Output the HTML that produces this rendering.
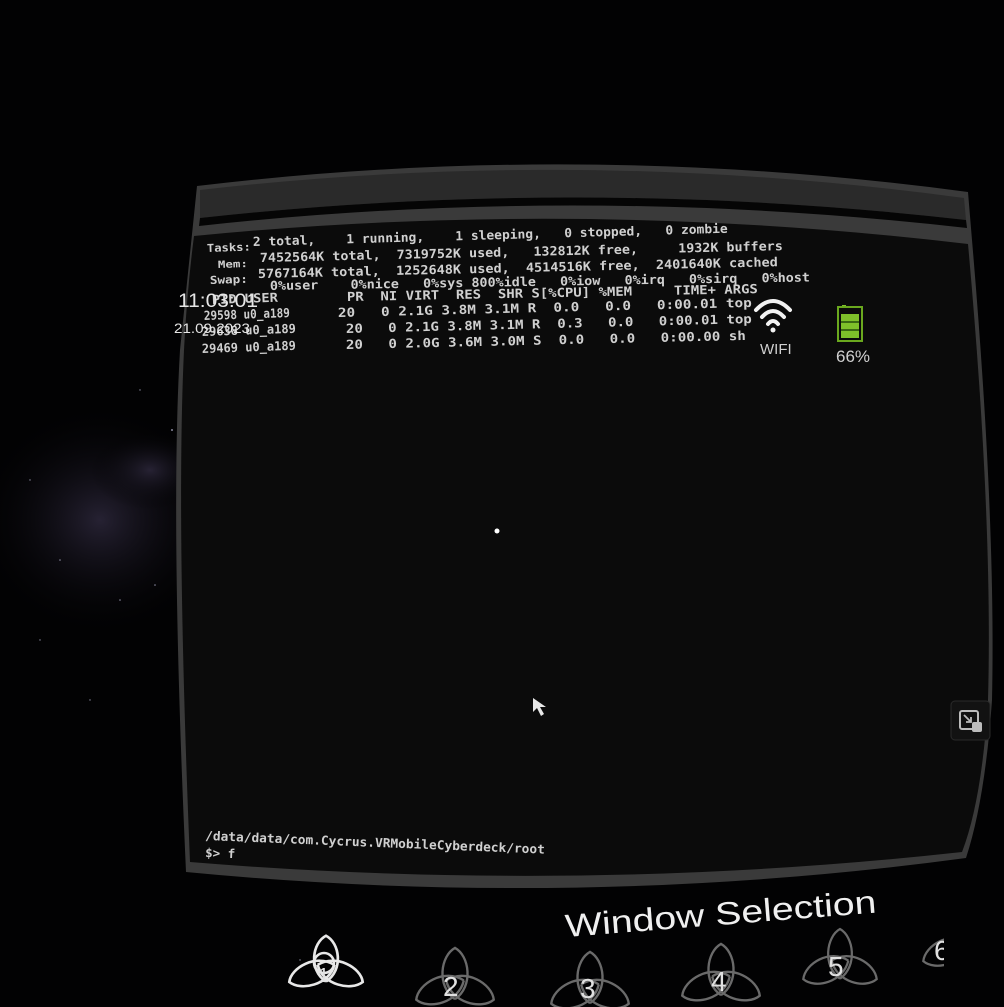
<!DOCTYPE html>
<html><head><meta charset="utf-8"><style>
html,body{margin:0;padding:0;background:#000;width:1004px;height:1007px;overflow:hidden}
svg{display:block}
.m{font-family:"DejaVu Sans Mono","Liberation Mono",monospace;fill:#d0d0d0;font-size:12.5px;font-weight:bold}
</style></head><body>
<svg width="1004" height="1007" viewBox="0 0 1004 1007" xmlns="http://www.w3.org/2000/svg">
<defs>
<radialGradient id="mw" cx="0.5" cy="0.5" r="0.5">
<stop offset="0" stop-color="#2a2538" stop-opacity="0.9"/>
<stop offset="1" stop-color="#000" stop-opacity="0"/>
</radialGradient>
<g id="tq" fill="none">
<path d="M0 16 C-20 2 -15 -30 0 -38 C15 -30 20 2 0 16"/>
<path d="M0 16 C-20 2 -15 -30 0 -38 C15 -30 20 2 0 16" transform="rotate(112) translate(0 -6)"/>
<path d="M0 16 C-20 2 -15 -30 0 -38 C15 -30 20 2 0 16" transform="rotate(-112) translate(0 -6)"/>
</g>
<clipPath id="cl"><rect x="0" y="0" width="944" height="1007"/></clipPath>
</defs>
<rect width="1004" height="1007" fill="#020203"/>
<ellipse cx="100" cy="520" rx="130" ry="120" fill="url(#mw)"/>
<ellipse cx="150" cy="470" rx="60" ry="40" fill="url(#mw)"/>
<g fill="#8a8aa0">
<circle cx="172" cy="430" r="1"/><circle cx="60" cy="560" r="0.8"/><circle cx="120" cy="600" r="0.8"/>
<circle cx="30" cy="480" r="0.7"/><circle cx="90" cy="700" r="0.7"/><circle cx="140" cy="390" r="0.7"/>
<circle cx="40" cy="640" r="0.7"/><circle cx="155" cy="585" r="0.8"/><circle cx="300" cy="960" r="0.7"/>
</g>
<path d="M197 186 Q580 140 968 192 L972 240 Q996 520 992 700 Q985 800 966 858 Q580 910 186 872 Q170 520 180 350 Z" fill="#3a3a3a"/>
<path d="M200 190 Q580 146 964 198 L966 220 Q580 176 200 218 Z" fill="#2a2a2a"/>
<path d="M200 218 Q580 176 966 220 L967 228 Q580 184 199 226 Z" fill="#050505"/>
<path d="M194 236 Q580 198 968 244 Q993 520 988 700 Q982 800 962 852 Q580 894 190 862 Q176 520 184 350 Q187 290 194 236 Z" fill="#0b0b0b"/>
<g class="m">
<text x="207" y="252" font-size="11" textLength="44" lengthAdjust="spacingAndGlyphs" transform="rotate(-2 207 252)">Tasks:</text>
<text x="218" y="268" font-size="10" textLength="30" lengthAdjust="spacingAndGlyphs" transform="rotate(-2 218 268)">Mem:</text>
<text x="210" y="284" font-size="11" textLength="38" lengthAdjust="spacingAndGlyphs" transform="rotate(-2 210 284)">Swap:</text>
<text x="253" y="246" textLength="475" lengthAdjust="spacingAndGlyphs" transform="rotate(-1.6 253 246)">2&#160;total,&#160;&#160;&#160;&#160;1&#160;running,&#160;&#160;&#160;&#160;1&#160;sleeping,&#160;&#160;&#160;0&#160;stopped,&#160;&#160;&#160;0&#160;zombie</text>
<text x="260" y="262" textLength="523" lengthAdjust="spacingAndGlyphs" transform="rotate(-1.3 260 262)">7452564K&#160;total,&#160;&#160;7319752K&#160;used,&#160;&#160;&#160;132812K&#160;free,&#160;&#160;&#160;&#160;&#160;1932K&#160;buffers</text>
<text x="258" y="278" textLength="520" lengthAdjust="spacingAndGlyphs" transform="rotate(-1.3 258 278)">5767164K&#160;total,&#160;&#160;1252648K&#160;used,&#160;&#160;4514516K&#160;free,&#160;&#160;2401640K&#160;cached</text>
<text x="270" y="290" textLength="540" lengthAdjust="spacingAndGlyphs" transform="rotate(-0.9 270 290)">0%user&#160;&#160;&#160;&#160;0%nice&#160;&#160;&#160;0%sys&#160;800%idle&#160;&#160;&#160;0%iow&#160;&#160;&#160;0%irq&#160;&#160;&#160;0%sirq&#160;&#160;&#160;0%host</text>
<text x="347" y="301" textLength="411" lengthAdjust="spacingAndGlyphs" transform="rotate(-1.1 347 301)">PR&#160;&#160;NI&#160;VIRT&#160;&#160;RES&#160;&#160;SHR&#160;S[%CPU]&#160;%MEM&#160;&#160;&#160;&#160;&#160;TIME+&#160;ARGS</text>
<text x="212" y="304" textLength="66" lengthAdjust="spacingAndGlyphs" transform="rotate(-2 212 304)">PID&#160;USER</text>
<text x="204" y="320" textLength="86" lengthAdjust="spacingAndGlyphs" transform="rotate(-2 204 320)">29598&#160;u0_a189</text>
<text x="202" y="336" textLength="94" lengthAdjust="spacingAndGlyphs" transform="rotate(-2 202 336)">29638&#160;u0_a189</text>
<text x="202" y="353" textLength="94" lengthAdjust="spacingAndGlyphs" transform="rotate(-2 202 353)">29469&#160;u0_a189</text>
<text x="338" y="317" textLength="414" lengthAdjust="spacingAndGlyphs" transform="rotate(-1.4 338 317)">20&#160;&#160;&#160;0&#160;2.1G&#160;3.8M&#160;3.1M&#160;R&#160;&#160;0.0&#160;&#160;&#160;0.0&#160;&#160;&#160;0:00.01&#160;top</text>
<text x="346" y="333" textLength="406" lengthAdjust="spacingAndGlyphs" transform="rotate(-1.4 346 333)">20&#160;&#160;&#160;0&#160;2.1G&#160;3.8M&#160;3.1M&#160;R&#160;&#160;0.3&#160;&#160;&#160;0.0&#160;&#160;&#160;0:00.01&#160;top</text>
<text x="346" y="349" textLength="400" lengthAdjust="spacingAndGlyphs" transform="rotate(-1.3 346 349)">20&#160;&#160;&#160;0&#160;2.0G&#160;3.6M&#160;3.0M&#160;S&#160;&#160;0.0&#160;&#160;&#160;0.0&#160;&#160;&#160;0:00.00&#160;sh</text>
</g>
<text x="178" y="307" font-family="Liberation Sans,sans-serif" font-size="19" fill="#e6e6e6" textLength="80" lengthAdjust="spacingAndGlyphs">11:03:01</text>
<text x="174" y="333" font-family="Liberation Sans,sans-serif" font-size="14" fill="#e6e6e6" textLength="76" lengthAdjust="spacingAndGlyphs">21.09.2023</text>
<g fill="none" stroke="#f2f2f2" stroke-width="4" stroke-linecap="round">
<path d="M756 310 Q773 292 790 310"/>
<path d="M762 317 Q773 305 784 317"/>
<path d="M768 324 Q773 318 778 324"/>
</g>
<circle cx="773" cy="330" r="2.5" fill="#f2f2f2"/>
<text x="760" y="354" font-family="Liberation Sans,sans-serif" font-size="15" fill="#cfcfcf">WIFI</text>
<rect x="842" y="305" width="4" height="3" fill="#7ec02a"/>
<rect x="838" y="307" width="24" height="34" fill="none" stroke="#6aa81e" stroke-width="2"/>
<rect x="841" y="314" width="18" height="24" fill="#7ec02a"/>
<line x1="841" y1="322" x2="859" y2="322" stroke="#244a0a" stroke-width="1.5"/>
<line x1="841" y1="330" x2="859" y2="330" stroke="#244a0a" stroke-width="1.5"/>
<text x="836" y="362" font-family="Liberation Sans,sans-serif" font-size="17" fill="#cfcfcf">66%</text>
<circle cx="497" cy="531" r="2.5" fill="#fff"/>
<path d="M533 698 L533 712 L537 708 L541 716 L544 714 L540 707 L546 707 Z" fill="#e8e8e8"/>
<g class="m" font-size="11.5">
<text x="205" y="840" textLength="340" lengthAdjust="spacingAndGlyphs" transform="rotate(2.3 205 840)">/data/data/com.Cycrus.VRMobileCyberdeck/root</text>
<text x="205" y="857" transform="rotate(2.3 205 857)">$&gt;&#160;f</text>
</g>
<rect x="951" y="701" width="39" height="39" rx="4" fill="#121212" stroke="#2a2a2a"/>
<rect x="960" y="711" width="18" height="18" rx="2" fill="none" stroke="#bcbcbc" stroke-width="2"/>
<path d="M964 715 L971 722 M971 717 L971 722 L966 722" stroke="#bcbcbc" stroke-width="1.8" fill="none"/>
<rect x="972" y="722" width="10" height="10" rx="2" fill="#bcbcbc"/>
<text x="566" y="937" font-family="Liberation Sans,sans-serif" font-size="32" fill="#f0f0f0" textLength="312" lengthAdjust="spacingAndGlyphs" transform="rotate(-4.5 566 937)">Window Selection</text>
<g clip-path="url(#cl)">
<use href="#tq" stroke="#e8e8e8" stroke-width="3" transform="translate(326 968) scale(0.9 0.85)"/>
<circle cx="324" cy="963" r="10" fill="none" stroke="#e8e8e8" stroke-width="2.5"/>
<use href="#tq" stroke="#6a6a6a" stroke-width="2.5" transform="translate(455 984) scale(0.95 0.95)"/>
<use href="#tq" stroke="#6a6a6a" stroke-width="2.5" transform="translate(590 988) scale(0.95 0.95)"/>
<use href="#tq" stroke="#6a6a6a" stroke-width="2.5" transform="translate(721 980) scale(0.95 0.95)"/>
<use href="#tq" stroke="#6a6a6a" stroke-width="2.5" transform="translate(840 964) scale(0.9 0.92)"/>
<use href="#tq" stroke="#6a6a6a" stroke-width="2.5" transform="translate(960 946) scale(0.9 0.92)"/>
<g font-family="Liberation Sans,sans-serif" font-size="28" fill="#e0e0e0">
<text x="318" y="982" font-size="20">1</text>
<text x="443" y="996">2</text>
<text x="580" y="998">3</text>
<text x="711" y="991">4</text>
<text x="828" y="976">5</text>
<text x="934" y="960">6</text>
</g>
</g>
</svg>
</body></html>
